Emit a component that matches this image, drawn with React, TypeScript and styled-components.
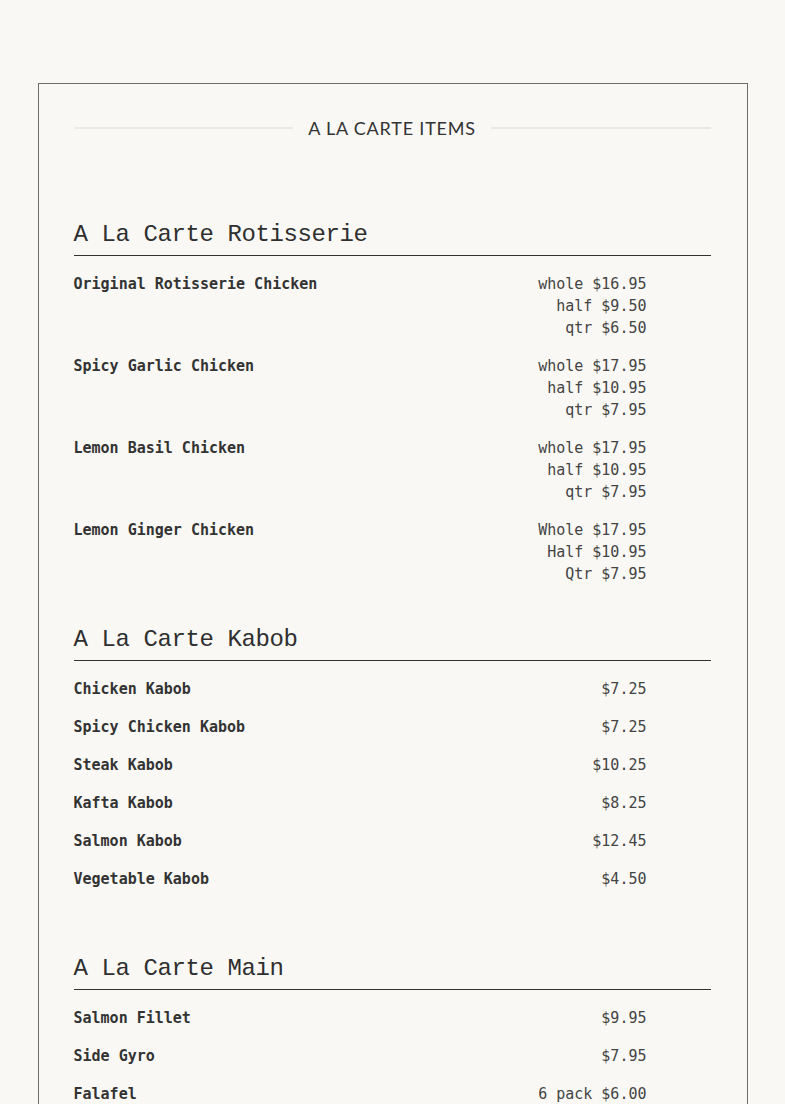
import React from 'react';
import styled, { createGlobalStyle } from 'styled-components';

const GlobalStyle = createGlobalStyle`
  html, body {
    margin: 0;
    padding: 0;
    background: #f9f8f4;
  }
  body {
    font-family: "DejaVu Sans Mono", "Liberation Mono", monospace;
    color: #333;
  }
`;

const Page = styled.div`
  padding-top: 83px;
`;

const Card = styled.section`
  width: 710px;
  margin: 0 auto;
  border: 1px solid #6f6d68;
  padding: 33px 36px 60px 35px;
  box-sizing: border-box;
`;

const TitleRow = styled.div`
  display: flex;
  align-items: center;
  gap: 15px;
  margin-bottom: 81px;
`;

const TitleLine = styled.div`
  flex: 1;
  height: 2px;
  background: #ebe9e4;
`;

const Title = styled.h2`
  margin: 0;
  font-family: Lato, "Open Sans", sans-serif;
  font-weight: 400;
  font-size: 18px;
  line-height: 22px;
  letter-spacing: 0.8px;
  color: #333;
`;

const Section = styled.div<{ $extra?: number }>`
  margin-bottom: ${p => 40 + (p.$extra || 0)}px;
`;

const SectionHeading = styled.h3`
  margin: 0 0 17px;
  padding-bottom: 6px;
  border-bottom: 1px solid #333;
  font-family: "Liberation Mono", monospace;
  font-weight: 400;
  font-size: 24px;
  line-height: 29px;
  letter-spacing: -0.4px;
  color: #2f2f2f;
`;

const ItemList = styled.div`
  display: flex;
  flex-direction: column;
  gap: 16px;
`;

const ItemRow = styled.div`
  display: flex;
  justify-content: space-between;
  align-items: flex-start;
`;

const ItemName = styled.div`
  font-weight: 700;
  font-size: 15px;
  line-height: 22px;
  color: #333;
`;

const PriceColumn = styled.div`
  display: flex;
  flex-direction: column;
  align-items: flex-end;
  padding-right: 64px;
  font-size: 15px;
  line-height: 22px;
  color: #444;
`;

type Item = { name: string; prices: string[] };
type MenuSection = { title: string; extra?: number; items: Item[] };

const sections: MenuSection[] = [
  {
    title: 'A La Carte Rotisserie',
    items: [
      { name: 'Original Rotisserie Chicken', prices: ['whole $16.95', 'half $9.50', 'qtr $6.50'] },
      { name: 'Spicy Garlic Chicken', prices: ['whole $17.95', 'half $10.95', 'qtr $7.95'] },
      { name: 'Lemon Basil Chicken', prices: ['whole $17.95', 'half $10.95', 'qtr $7.95'] },
      { name: 'Lemon Ginger Chicken', prices: ['Whole $17.95', 'Half $10.95', 'Qtr $7.95'] },
    ],
  },
  {
    title: 'A La Carte Kabob',
    extra: 24,
    items: [
      { name: 'Chicken Kabob', prices: ['$7.25'] },
      { name: 'Spicy Chicken Kabob', prices: ['$7.25'] },
      { name: 'Steak Kabob', prices: ['$10.25'] },
      { name: 'Kafta Kabob', prices: ['$8.25'] },
      { name: 'Salmon Kabob', prices: ['$12.45'] },
      { name: 'Vegetable Kabob', prices: ['$4.50'] },
    ],
  },
  {
    title: 'A La Carte Main',
    items: [
      { name: 'Salmon Fillet', prices: ['$9.95'] },
      { name: 'Side Gyro', prices: ['$7.95'] },
      { name: 'Falafel', prices: ['6 pack $6.00'] },
    ],
  },
];

const App: React.FC = () => {
  return (
    <Page>
      <GlobalStyle />
      <Card>
        <TitleRow>
          <TitleLine />
          <Title>A LA CARTE ITEMS</Title>
          <TitleLine />
        </TitleRow>
        {sections.map(section => (
          <Section key={section.title} $extra={section.extra}>
            <SectionHeading>{section.title}</SectionHeading>
            <ItemList>
              {section.items.map(item => (
                <ItemRow key={item.name}>
                  <ItemName>{item.name}</ItemName>
                  <PriceColumn>
                    {item.prices.map(p => (
                      <span key={p}>{p}</span>
                    ))}
                  </PriceColumn>
                </ItemRow>
              ))}
            </ItemList>
          </Section>
        ))}
      </Card>
    </Page>
  );
};

export default App;
